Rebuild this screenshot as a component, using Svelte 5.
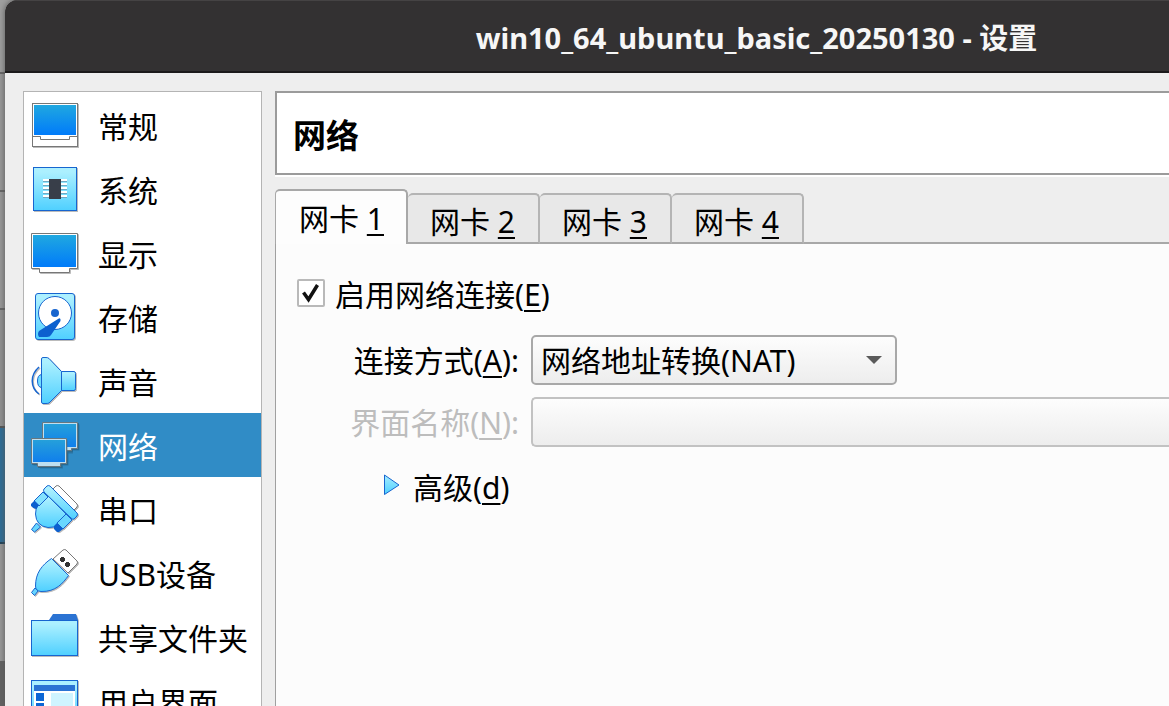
<script lang="ts">
  const sections = [
    { id: 'general', label: '常规' },
    { id: 'system', label: '系统' },
    { id: 'display', label: '显示' },
    { id: 'storage', label: '存储' },
    { id: 'audio', label: '声音' },
    { id: 'network', label: '网络' },
    { id: 'serial', label: '串口' },
    { id: 'usb', label: 'USB设备' },
    { id: 'folders', label: '共享文件夹' },
    { id: 'interface', label: '用户界面' }
  ];
  const adapters = [1, 2, 3, 4];
  let section = $state('network');
  let adapter = $state(1);
  let enabled = $state(true);
</script>

<div class="desktop">
  <div class="window">
    <header class="titlebar"><span>win10_64_ubuntu_basic_20250130 - 设置</span></header>
    <div class="content">
      <nav class="sections">
        {#each sections as s (s.id)}
          <button class="section" class:selected={section === s.id} onclick={() => (section = s.id)}>
            <svg width="48" height="48" viewBox="0 0 48 48" aria-hidden="true">
              <defs>
                <linearGradient id="screen-{s.id}" x1="0" y1="0" x2="0" y2="1">
                  <stop offset="0" stop-color="#20a8e0" /><stop offset="1" stop-color="#007bfa" />
                </linearGradient>
                <linearGradient id="net-{s.id}" x1="0" y1="0" x2="0" y2="1">
                  <stop offset="0" stop-color="#25a0da" /><stop offset="1" stop-color="#107fec" />
                </linearGradient>
                <linearGradient id="cyan-{s.id}" x1="0" y1="0" x2="0" y2="1">
                  <stop offset="0.1" stop-color="#acf0ff" /><stop offset="1" stop-color="#4fd0ff" />
                </linearGradient>
              </defs>
              {#if s.id === 'general'}
                <rect x="1.5" y="2.5" width="45" height="43" fill="#fff" stroke="#777" />
                <rect x="3" y="4" width="42" height="30" fill="url(#screen-{s.id})" />
                <path d="M1.5 35.5H9.500V38.500H38.500V35.500H46.500" fill="none" stroke="#777" />
              {:else if s.id === 'system'}
                <rect x="2.5" y="2.5" width="43" height="43" fill="url(#cyan-{s.id})" stroke="#1765cf" />
                <path d="M12 16.500H36M12 20.500H36M12 24.500H36M12 28.500H36M12 32.500H36" stroke="#6fa9c4" />
                <path d="M12 15H36M12 19H36M12 23H36M12 27H36M12 31H36" stroke="#fff" stroke-width="2" />
                <rect x="18" y="14" width="12" height="20" fill="#383e49" />
              {:else if s.id === 'display'}
                <path d="M.5 4.500H46.500V39.500H38.500V43.500H8.500V39.500H.5Z" fill="#fff" stroke="#777" />
                <rect x="2" y="6" width="43" height="32" fill="url(#screen-{s.id})" />
              {:else if s.id === 'storage'}
                <rect x="4.500" y=".5" width="39" height="46" rx="2.500" fill="url(#cyan-{s.id})" stroke="#1765cf" />
                <circle cx="24" cy="20" r="16.500" fill="#fff" stroke="#1765cf" />
                <circle cx="24" cy="20" r="4" fill="#1765cf" />
                <path d="M27 26Q30 24 29.500 28L20 42Q19 44 16 44H8Q6 41 8 38Z" fill="#0c60cf" />
              {:else if s.id === 'audio'}
                <path d="M8 10C-1 18 -1 30 8 37" fill="none" stroke="#1765cf" stroke-width="1.500" />
                <path d="M10.500 17.500Q6.500 18 6.500 24Q6.500 30 10.500 30.500Z" fill="#71dcff" stroke="#1765cf" />
                <path d="M12 .5H15Q17 .5 18 1.500L30.500 14.500V33.500L18 46Q17 46.500 15 46.500H12Q10.500 46.500 10.500 45V2Q10.500 .5 12 .5Z" fill="url(#cyan-{s.id})" stroke="#1765cf" />
                <path d="M30.500 14.500H43Q44.500 14.500 44.500 16.500V31.500Q44.500 33.500 43 33.500H30.500Z" fill="url(#cyan-{s.id})" stroke="#1765cf" />
              {:else if s.id === 'network'}
                <path d="M12.500 2.500H47.500V28.500H41V31.500H20V28.500H12.500Z" fill="#36708f" opacity=".6" />
                <path d="M11.500 1.500H46.500V27.500H40.500V29.500H19.500V27.500H11.500Z" fill="#bfdff0" stroke="#68777f" />
                <rect x="13" y="3" width="32" height="23" fill="url(#net-{s.id})" />
                <path d="M1.500 18.500H36.500V43.500H31V46.500H8V43.500H1.500Z" fill="#36708f" opacity=".6" />
                <path d="M.5 17.500H35.500V42.500H29.500V45.500H6.500V42.500H.5Z" fill="#bfdff0" stroke="#68777f" />
                <rect x="2" y="19" width="32" height="22" fill="url(#net-{s.id})" />
              {:else if s.id === 'serial'}
                <path d="M22 4L25 1Q26 0 28 1L46 19Q47 21 46 22L43 25Z" fill="#fff" stroke="#777" />
                <path d="M5.500 38L9.500 42L3.500 47L.5 44.500Z" fill="#67d6ff" stroke="#1765cf" />
                <path d="M16 10L37 31L29 39Q24 43 17 42.500Q5 41 4.500 29Q4.500 24 7 20Z" fill="url(#cyan-{s.id})" stroke="#1765cf" />
                <path d="M12 7L17 12L8 21L3 16Z" fill="#84e2ff" stroke="#1765cf" />
                <path d="M3.500 15.500L8 20L5 24Q3 24 0 21V19Z" fill="#0c60cf" />
                <path d="M35 29L41 35L32 44L26 38Z" fill="#69d7ff" stroke="#1765cf" />
                <path d="M26 38L32 44L28 47H26L23 44V41Z" fill="#0c60cf" />
                <path d="M13 4L16 1Q17 0 19 1L46 28Q47 29 46 31L43 34Q42 35 40 33L13 7Q12 5 13 4Z" fill="url(#cyan-{s.id})" stroke="#1765cf" />
              {:else if s.id === 'usb'}
                <path d="M22 10L32 1Q34 0 35 1L46 12Q47 13 46 15L37 24Z" fill="#fff" stroke="#777" />
                <path d="M30 8H33V13H30ZM29 9H34V12H29ZM35 13H38V18H35ZM34 14H39V17H34Z" fill="#333" />
                <path d="M4 39L7 42L3.500 46.500L.5 43.500Z" fill="#67d6ff" stroke="#1765cf" />
                <path d="M20.500 9.500L37.500 26.500C32 34 25 43 10 42.500Q4.500 42 4.500 37C4.500 24 11 16 20.500 9.500Z" fill="url(#cyan-{s.id})" stroke="#1765cf" />
              {:else if s.id === 'folders'}
                <path d="M18 7L22 1H45L47 7Z" fill="#2b73d3" />
                <rect x=".5" y="7.500" width="46" height="35" fill="url(#cyan-{s.id})" stroke="#1765cf" />
              {:else}
                <rect x=".5" y="3.500" width="46" height="42" fill="url(#cyan-{s.id})" stroke="#1765cf" />
                <rect x="3" y="8" width="41" height="6" fill="#2b73d3" />
                <rect x="3" y="14" width="41" height="29" fill="#fff" />
                <path d="M5 16H13V24H5ZM5 26H13V34H5Z" fill="#0c66d5" />
                <rect x="20" y="16" width="22" height="26" fill="#cff4ff" />
              {/if}
            </svg>
            <span>{s.label}</span>
          </button>
        {/each}
      </nav>

      <main class="page">
        <h1>网络</h1>
        <div class="tabs" role="tablist">
          {#each adapters as n (n)}
            <button class="tab" role="tab" aria-selected={adapter === n} class:active={adapter === n} onclick={() => (adapter = n)}>网卡&nbsp;<u>{n}</u></button>
          {/each}
          <div class="rest"></div>
        </div>
        <section class="pane">
          <label class="enable">
            <input type="checkbox" bind:checked={enabled} />
            <svg class="box" width="28" height="28" viewBox="0 0 28 28" aria-hidden="true">
              <rect x="1" y="1" width="26" height="26" rx="1" fill="#fff" stroke="#b9b9b9" stroke-width="2" />
              {#if enabled}<path d="M6.500 13.500L11.500 20.500L20.500 6" fill="none" stroke="#111" stroke-width="3.500" />{/if}
            </svg>
            <span>启用网络连接(<u>E</u>)</span>
          </label>
          <div class="form">
            <label for="attached">连接方式(<u>A</u>):</label>
            <div class="combo">
              <select id="attached"><option>网络地址转换(NAT)</option></select>
              <svg width="16" height="8" viewBox="0 0 16 8" aria-hidden="true"><path d="M0 0H16L8 8Z" fill="#5a5a5a" /></svg>
            </div>
            <label class="off" for="name">界面名称(<u>N</u>):</label>
            <select id="name" class="wide" disabled></select>
          </div>
          <button class="advanced">
            <svg width="16" height="22" viewBox="0 0 16 22" aria-hidden="true">
              <defs><linearGradient id="arrow" x1="0" y1="0" x2="0" y2="1"><stop offset="0" stop-color="#a5edff" /><stop offset="1" stop-color="#4dcfff" /></linearGradient></defs>
              <path d="M.5 1L15 11L.5 20.500Z" fill="url(#arrow)" stroke="#1765cf" />
            </svg>
            <span>高级(<u>d</u>)</span>
          </button>
        </section>
      </main>
    </div>
  </div>
</div>

<style>
  * { box-sizing: border-box; }
  .desktop {
    height: 100vh;
    padding-left: 5px;
    overflow: hidden;
    font: 30px/48px "Noto Sans", "Noto Sans CJK SC", sans-serif;
    color: #000;
    background: linear-gradient(#a0a0a0 0 72px, #666 72px 74px, #999 74px 190px, #666 190px 192px, #999 192px 308px, #666 308px 310px, #929292 310px 426px, #555 426px 428px, #2d6e98 428px 542px, #20435a 542px 544px, #999 544px 661px, #626262 661px);
  }
  .window { height: 100%; display: flex; flex-direction: column; background: #eee; border-radius: 12px 0 0 0; overflow: hidden; box-shadow: 0 0 6px #555; }
  .titlebar {
    flex: none; height: 73px; display: flex; align-items: center; justify-content: center;
    padding: 4px 0 0 339px; background: #333132; color: #f6f6f6;
    border-top: 1px solid #454344; border-bottom: 2px solid #1b1a1b;
    font-size: 29px; font-weight: 700; white-space: nowrap;
  }
  .content { flex: 1; min-height: 0; display: flex; gap: 13px; padding: 18px 0 0 18px; }
  .sections { flex: none; width: 239px; overflow: hidden; border: 1px solid #b4b4b4; border-bottom: 0; padding-top: 1px; background: #fff; }
  button { border: 0; margin: 0; padding: 0; background: none; font: inherit; color: inherit; text-align: left; }
  .section { display: flex; align-items: center; gap: 19px; width: 100%; height: 64px; padding-left: 7px; white-space: nowrap; }
  .section svg { flex: none; filter: drop-shadow(1px 1px 0 #0004); overflow: visible; }
  .section span { padding-top: 4px; }
  .selected { background: #308cc6; color: #fff; }
  .page { flex: 1; min-width: 0; display: flex; flex-direction: column; }
  h1 { margin: 0 0 14px; padding: 19px 16px; height: 84px; border: 2px solid #9b9b9b; border-width: 2px 0 2px 2px; box-shadow: 0 2px 0 #fff; background: #fff; font-size: 33px; line-height: 48px; font-weight: 700; }
  u { text-decoration: underline; text-decoration-thickness: 2px; text-underline-offset: 4px; text-decoration-skip-ink: none; }
  .tabs { display: flex; align-items: flex-end; height: 55px; }
  .tab { width: 132px; height: 51px; padding: 3px 0 0 22px; border: 2px solid #b4b4b4; border-left-width: 0; border-bottom-color: #a8a8a8; border-radius: 5px 5px 0 0; background: #e8e8e8; }
  .tab.active { width: 133px; height: 55px; padding: 2px 0 0 23px; border: 2px solid #a8a8a8; border-left-width: 1px; border-bottom: 0; background: #fdfdfd; }
  .rest { flex: 1; border-bottom: 2px solid #a8a8a8; }
  .pane { flex: 1; border-left: 1px solid #a0a0a0; padding: 27px 0 0 21px; background: #fcfcfc; }
  .enable { display: flex; align-items: center; gap: 10px; width: max-content; height: 48px; }
  .enable input { position: absolute; opacity: 0; }
  .enable .box { margin-bottom: 4px; }
  .form { display: grid; grid-template-columns: 222px minmax(0, 1fr); column-gap: 12px; row-gap: 12px; margin-top: 16px; }
  .form label { text-align: right; line-height: 52px; height: 50px; white-space: nowrap; }
  .off { color: #bdbdbd; }
  .combo { display: grid; width: 366px; align-items: center; }
  .combo select, .combo svg { grid-area: 1 / 1; }
  .combo svg { justify-self: end; margin-right: 15px; pointer-events: none; }
  select { appearance: none; width: 100%; height: 50px; padding: 0 8px; border: 2px solid #a8a8a8; border-radius: 5px; background: linear-gradient(#fdfdfd, #ededed); font: inherit; color: #000; opacity: 1; }
  .wide { border-color: #c2c2c2; border-right: 0; border-radius: 5px 0 0 5px; }
  .advanced { display: flex; align-items: center; gap: 13px; height: 48px; margin: 17px 0 0 87px; }
  .advanced svg { margin-bottom: 6px; }
</style>
